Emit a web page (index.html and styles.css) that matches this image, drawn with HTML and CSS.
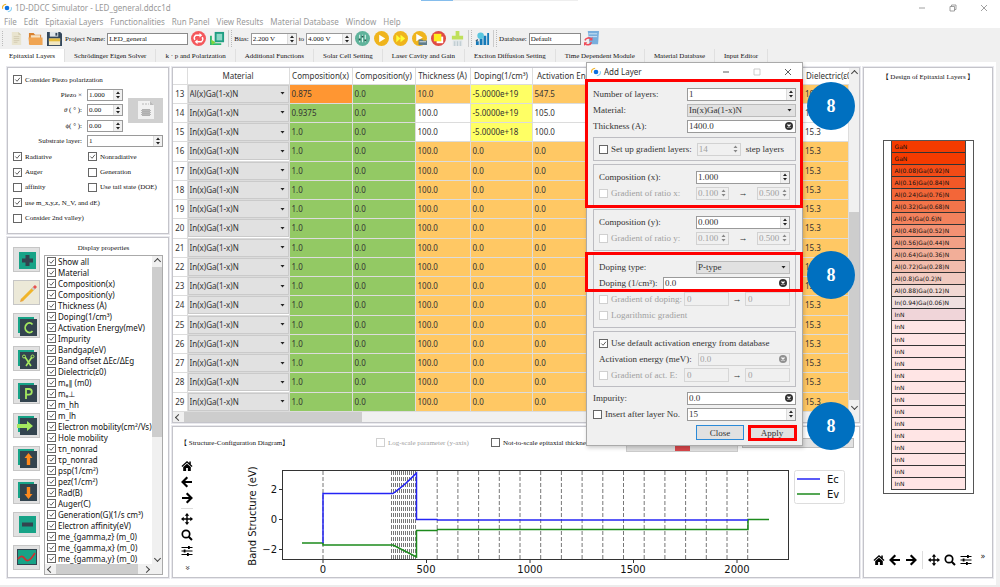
FILE: index.html
```html
<!DOCTYPE html>
<html lang="en">
<head>
<meta charset="utf-8">
<title>1D-DDCC Simulator - LED_general.ddcc1d</title>
<link rel="stylesheet" href="styles.css">
</head>
<body>
<svg class="defs" aria-hidden="true">
  <symbol id="logo" viewBox="0 0 12 12"><path d="M1 7A5 4 0 0 1 5 1.500" fill="none" stroke="#f2b632" stroke-width="1.400"/><path d="M11 5A5 4 0 0 1 7 10.500" fill="none" stroke="#8fd3f5" stroke-width="1.400"/><circle cx="6" cy="6" r="2.800" fill="#0b6fe0"/></symbol>
  <symbol id="home" viewBox="0 0 12 12"><path d="M6 1 0.500 6l.8.9L6 2.800l4.700 4.100.8-.9-1.700-1.600V1.500H8.300v1.600zM6 3.700 2.200 7v4h2.900V8h1.800v3h2.900V7z"/></symbol>
  <symbol id="back" viewBox="0 0 12 12"><path d="M6.300 1.300 1.600 6l4.700 4.700M2 6h9" fill="none" stroke="#000" stroke-width="2.200"/></symbol>
  <symbol id="fwd" viewBox="0 0 12 12"><path d="M5.700 1.300 10.400 6l-4.700 4.700M10 6H1" fill="none" stroke="#000" stroke-width="2.200"/></symbol>
  <symbol id="move" viewBox="0 0 12 12"><path d="M6 0l2.200 2.700H6.700v2.600h2.600V3.800L12 6 9.300 8.200V6.700H6.700v2.600h1.500L6 12 3.800 9.300h1.500V6.700H2.700v1.500L0 6l2.700-2.200v1.500h2.600V2.700H3.800z"/></symbol>
  <symbol id="lens" viewBox="0 0 12 12"><circle cx="5" cy="5" r="3.700" fill="none" stroke="#000" stroke-width="1.700"/><path d="M7.700 7.700 11 11" stroke="#000" stroke-width="2"/></symbol>
  <symbol id="sliders" viewBox="0 0 12 12"><path d="M0.500 2.500h11M.5 6h11M.5 9.500h11" stroke="#000"/><path d="M7 1h1.800v3H7zM2.700 4.500h1.800v3H2.700zM6 8h1.800v3H6z"/></symbol>
</svg>

<div class="app">
  <header class="titlebar">
    <svg class="logo"><use href="#logo"/></svg>
    <span class="caption">1D-DDCC Simulator - LED_general.ddcc1d</span>
    <span class="drag"></span>
    <button aria-label="Minimize"><svg viewBox="0 0 8 8"><path d="M1 4h6"/></svg></button>
    <button aria-label="Restore"><svg viewBox="0 0 8 8"><path d="M1 2.500h4.500V7H1zM2.500 2.500V1H7v4.500H5.500"/></svg></button>
    <button aria-label="Close window"><svg viewBox="0 0 8 8"><path d="M1 1l6 6M7 1 1 7"/></svg></button>
  </header>

  <nav class="menubar">
    <button>File</button><button>Edit</button><button>Epitaxial Layers</button><button>Functionalities</button><button>Run Panel</button><button>View Results</button><button>Material Database</button><button>Window</button><button>Help</button>
  </nav>

  <div class="toolbar">
    <i class="grip"></i>
    <button class="tool" aria-label="New"><svg viewBox="0 0 16 16"><path d="M3 1h7l3 3v11H3z" fill="#e9e4cf"/><path d="M10 1v3h3" fill="#cfc8aa"/><path d="M5 6h6M5 8h6M5 10h6M5 12h4" stroke="#d3ccb2"/></svg></button>
    <button class="tool" aria-label="Open"><svg viewBox="0 0 16 16"><path d="M1 2h5l1.500 2H14v10H1z" fill="#d9822f"/><path d="M3 4.500h10v5H3z" fill="#f6e3c4"/><path d="M.5 7h15v8H1.500z" fill="#f0a553"/></svg></button>
    <button class="tool" aria-label="Save"><svg viewBox="0 0 16 16"><path d="M0 1h14l2 2v13H0z" fill="#33475c"/><path d="M3 1h9v5H3z" fill="#dfe5ea"/><path d="M9 2h2v3H9z" fill="#33475c"/><path d="M2 8h12v7H2z" fill="#f2e6c0"/><path d="M2 8h12v3H2z" fill="#e4bb3c"/></svg></button>
    <label for="project">Project Name:</label>
    <input id="project" class="field project" value="LED_general">
    <button class="tool" aria-label="Sync"><svg viewBox="0 0 16 16"><circle cx="8" cy="8" r="8" fill="#f4585c"/><path d="M4 9.500a4 4 0 0 1 1-5h4.500M12 6.500a4 4 0 0 1-1 5H6.500" fill="none" stroke="#fff" stroke-width="1.500"/><path d="M9 2l3 2.500L9 7zM7 9l-3 2.500L7 14z" fill="#fff"/></svg></button>
    <button class="tool" aria-label="Reload"><svg viewBox="0 0 16 16"><path d="M5 1h10v11H5z" fill="#1f9e83"/><path d="M7 3h6v7H7z" fill="#8fd9c8"/><path d="M2 5v8h10v2H0V5z" fill="#2eb872"/><path d="M1 9l5 3-4 3z" fill="#7cd63c"/></svg></button>
    <i class="sep"></i>
    <label for="bias1">Bias:</label>
    <span class="spin bias"><input id="bias1" value="2.200 V"><i></i></span>
    <label for="bias2">to</label>
    <span class="spin bias"><input id="bias2" value="4.000 V"><i></i></span>
    <button class="tool" aria-label="Settings"><svg viewBox="0 0 16 16"><circle cx="8" cy="8" r="8" fill="#5fb39b"/><path d="M5 4v8M8 4v8M11 4v8" stroke="#e8f7f2"/><path d="M4 8h2v2H4zM7 5h2v2H7zM10 9h2v2h-2z" fill="#24584b"/></svg></button>
    <button class="tool" aria-label="Run"><svg viewBox="0 0 16 16"><circle cx="8" cy="8" r="8" fill="#efb41d"/><path d="M5.500 4l6.500 4-6.500 4z" fill="#fff"/></svg></button>
    <button class="tool" aria-label="Fast run"><svg viewBox="0 0 16 16"><circle cx="8" cy="8" r="8" fill="#efb41d"/><path d="M3.500 4 8 8l-4.500 4zM8 4l5 4-5 4z" fill="#ffff35"/></svg></button>
    <button class="tool" aria-label="Run file"><svg viewBox="0 0 16 16"><circle cx="8" cy="8" r="8" fill="#efb41d"/><path d="M4.500 3l7 4-7 4z" fill="#fff"/><path d="M7 9h4l1 1h4v5H7z" fill="#607d8b"/><path d="M8 11h7v1H8z" fill="#dfe8ec"/></svg></button>
    <button class="tool" aria-label="Stop"><svg viewBox="0 0 16 16"><circle cx="8" cy="8" r="8" fill="#df4b45"/><path d="M6 6h7v7H6z" fill="#fff"/><path d="M3 3h8v8H3z" fill="#ffee1c"/></svg></button>
    <button class="tool" aria-label="Clean"><svg viewBox="0 0 16 16"><path d="M6 0h4v5h4v4H2V5h4z" fill="#bfe05b"/><path d="M3 10h10v6H3z" fill="#dde4e7"/><path d="M5 11v5M8 11v5M11 11v5" stroke="#bcc9ce"/></svg></button>
    <i class="sep"></i>
    <button class="tool" aria-label="Plot"><svg viewBox="0 0 16 16"><path d="M1 11h3v4H1zM5 8h3v7H5zM9 5h3v10H9zM13 2h2v13h-2z" fill="#1479b8"/><circle cx="6" cy="5" r="3.500" fill="#59c6df"/><path d="M3 9 1 11" stroke="#2c5673" stroke-width="1.500"/></svg></button>
    <i class="sep"></i>
    <label for="db">Database:</label>
    <input id="db" class="field db" value="Default">
    <button class="tool" aria-label="Refresh database"><svg viewBox="0 0 16 16"><path d="M4 0h12l-1 14H6z" fill="#78aedd"/><path d="M5 3h9M5 6h9" stroke="#d4e7f6"/><path d="M1 10a4 4 0 0 1 7-1M8 12a4 4 0 0 1-7 1" fill="none" stroke="#ee4b59" stroke-width="1.700"/><path d="M9 6v4H5.500zM0 16v-4h3.500z" fill="#ee4b59"/></svg></button>
  </div>

  <nav class="tabs">
    <button class="active">Epitaxial Layers</button><button>Schrödinger Eigen Solver</button><button>k · p and Polarization</button><button>Additional Functions</button><button>Solar Cell Setting</button><button>Laser Cavity and Gain</button><button>Exciton Diffusion Setting</button><button>Time Dependent Module</button><button>Material Database</button><button>Input Editor</button>
  </nav>

  <main class="workspace">
    <div class="col left">
      <section class="panel options">
        <label><input type="checkbox" checked>Consider Piezo polarization</label>
        <div class="piezo">
          <label for="px">Piezo ×</label><span class="spin"><input id="px" value="1.000"><i></i></span>
          <label for="th"><em>θ</em>&nbsp;( ° ):</label><span class="spin"><input id="th" value="0.00"><i></i></span>
          <label for="ph">ϕ( ° ):</label><span class="spin"><input id="ph" value="0.00"><i></i></span>
          <button class="doc" aria-label="Layer file"><svg viewBox="0 0 18 20"><path d="M1 1h12l4 4v14H1z" fill="#f1f1f1"/><path d="M13 1v4h4" fill="#bbb"/><path d="M5 9h8v7H5z" fill="#b0b0b0"/><path d="M5 4h2M8 4h2M11 4h1M4 10.500h10M4 12.500h10M4 14.500h10" stroke="#b8b8b8"/></svg></button>
        </div>
        <div class="substrate"><label for="sub">Substrate layer:</label><span class="spin"><input id="sub" value="1"><i></i></span></div>
        <div class="pair"><label><input type="checkbox" checked>Radiative</label><label><input type="checkbox" checked>Nonradiative</label></div>
        <div class="pair"><label><input type="checkbox" checked>Auger</label><label><input type="checkbox">Generation</label></div>
        <div class="pair"><label><input type="checkbox">affinity</label><label><input type="checkbox">Use tail state (DOE)</label></div>
        <label><input type="checkbox" checked>use m_x,y,z, N_V, and dE)</label>
        <label><input type="checkbox">Consider 2nd valley)</label>
      </section>

      <section class="panel display">
        <div class="actions">
          <button aria-label="Add"><svg viewBox="0 0 20 20"><path d="M2 2h17v17H2z" fill="#17a387"/><path d="M10.500 5v11M5 10.500h11" stroke="#33444f" stroke-width="4"/></svg></button>
          <button class="edit" aria-label="Edit"><svg viewBox="0 0 20 20"><path d="M5 17 17 5" stroke="#f0b429" stroke-width="3"/><path d="M15.500 6.500 18 4" stroke="#c9c9c9" stroke-width="3"/><path d="M17 5l2-2" stroke="#e8524f" stroke-width="3"/><path d="M3 19l1-3.500L6.500 18z" fill="#e8a23a"/></svg></button>
          <button aria-label="Copy"><svg viewBox="0 0 20 20"><path d="M1 1h16v16H1z" fill="#17a387"/><path d="M3 3h17v17H3z" fill="#33444f"/><path d="M15.500 8.500A4.200 4.800 0 1 0 15.500 15" fill="none" stroke="#a5e85f" stroke-width="1.800"/></svg></button>
          <button aria-label="Cut"><svg viewBox="0 0 20 20"><path d="M1 1h16v16H1z" fill="#17a387"/><path d="M3 3h17v17H3z" fill="#33444f"/><path d="M8 8l6 9M15 8 9 17" stroke="#a5e85f" stroke-width="1.600"/><circle cx="7" cy="7.500" r="1.500" fill="none" stroke="#a5e85f"/><circle cx="15.500" cy="7.500" r="1.500" fill="none" stroke="#a5e85f"/></svg></button>
          <button aria-label="Paste"><svg viewBox="0 0 20 20"><path d="M1 1h16v16H1z" fill="#17a387"/><path d="M3 3h17v17H3z" fill="#33444f"/><path d="M9 17V7h3a2.800 2.800 0 0 1 0 5.600H9" fill="none" stroke="#a5e85f" stroke-width="1.800"/></svg></button>
          <button aria-label="Insert"><svg viewBox="0 0 20 20"><path d="M1 1h16v16H1z" fill="#17a387"/><path d="M3 3h17v17H3z" fill="#33444f"/><path d="M0 9h10V6l6 5-6 5v-3H0z" fill="#a5e85f"/></svg></button>
          <button aria-label="Move up"><svg viewBox="0 0 20 20"><path d="M1 1h16v16H1z" fill="#17a387"/><path d="M3 3h17v17H3z" fill="#33444f"/><path d="M11.500 5l4 5h-2.300v7H9.800v-7H7.500z" fill="#ff8a1d"/></svg></button>
          <button aria-label="Move down"><svg viewBox="0 0 20 20"><path d="M1 1h16v16H1z" fill="#17a387"/><path d="M3 3h17v17H3z" fill="#33444f"/><path d="M11.500 18l4-5h-2.300V6H9.800v7H7.500z" fill="#ff8a1d"/></svg></button>
          <button aria-label="Remove"><svg viewBox="0 0 20 20"><path d="M2 2h17v17H2z" fill="#17a387"/><path d="M5 10.500h11" stroke="#33444f" stroke-width="4"/></svg></button>
          <button aria-label="Curve"><svg viewBox="0 0 20 20"><path d="M0 2h20v16H0z" fill="#33444f"/><path d="M1 3h18v14H1z" fill="#17a387"/><path d="M1 12c3-4 5-3 7 0s5 2 10-6" fill="none" stroke="#cf2f2f" stroke-width="1.600"/></svg></button>
        </div>
        <div class="props">
          <h2>Display properties</h2>
          <div class="listbox">
            <div class="items" id="properties"></div>
            <div class="vbar"><i class="up"></i><b></b><i class="down"></i></div>
            <div class="hbar"><i class="prev"></i><b></b><i class="next"></i></div>
          </div>
        </div>
      </section>
    </div>

    <div class="col middle">
      <section class="panel grid">
        <div class="tablewrap">
          <table>
            <colgroup><col class="c-num"><col class="c-mat"><col class="c-cx"><col class="c-cy"><col class="c-th"><col class="c-dop"><col class="c-act"><col><col class="c-die"></colgroup>
            <thead><tr><th></th><th>Material</th><th>Composition(x)</th><th>Composition(y)</th><th>Thickness (Å)</th><th>Doping(1/cm³)</th><th>Activation Energy(meV)</th><th></th><th class="clip">Dielectric(ε0)</th></tr></thead>
            <tbody id="layers"></tbody>
          </table>
        </div>
        <div class="vbar"><i class="up"></i><b></b><i class="down"></i></div>
        <div class="hbar"><i class="prev"></i><b></b></div>
      </section>

      <section class="panel diagram">
        <div class="diagram-head">
          <h2>【 Structure-Configuration Diagram】</h2>
          <label class="off"><input type="checkbox" disabled>Log-scale parameter (y-axis)</label>
          <label><input type="checkbox">Not-to-scale epitaxial thickness</label>
          <button class="export" aria-label="Export"><i></i></button>
          <select aria-label="Parameter"><option></option></select>
        </div>
        <div class="diagram-body">
          <div class="plot-tools vertical">
            <button aria-label="Home"><svg><use href="#home"/></svg></button>
            <button aria-label="Back"><svg><use href="#back"/></svg></button>
            <button aria-label="Forward"><svg><use href="#fwd"/></svg></button>
            <hr>
            <button aria-label="Pan"><svg><use href="#move"/></svg></button>
            <button aria-label="Zoom"><svg><use href="#lens"/></svg></button>
            <button aria-label="Configure"><svg><use href="#sliders"/></svg></button>
            <button class="more" aria-label="More">»</button>
          </div>
          <svg class="chart" viewBox="240 458 619 119" role="img" aria-label="Band structure">
            <g id="gridlines"></g>
            <path d="M302 543H323V545H393L416.500 557V530.500H437L437.500 529.500H748V519.500H769" class="ev"/>
            <path d="M323 543V493.500H393Q405 485 416.500 473V519.500H437L437.500 520H748" class="ec"/>
            <rect x="282.500" y="470.500" width="506" height="89" class="frame"/>
            <path d="M279 489.500h3M279 519.500h3M279 549.500h3M323 560v3M426.500 560v3M530 560v3M633.500 560v3M737 560v3" class="tick"/>
            <g class="ends"><text x="277" y="493">2</text><text x="277" y="523">0</text><text x="277" y="553">−2</text></g>
            <g class="mids"><text x="323" y="573">0</text><text x="426" y="573">500</text><text x="530" y="573">1000</text><text x="633" y="573">1500</text><text x="737" y="573">2000</text><text transform="translate(256 516) rotate(-90)">Band Structure (eV)</text></g>
            <rect x="794.500" y="470.500" width="50" height="33" rx="2" class="legend"/>
            <path d="M797 479H820" class="ec"/><path d="M797 494H820" class="ev"/>
            <text x="827" y="483">Ec</text><text x="827" y="498">Ev</text>
          </svg>
        </div>
      </section>
    </div>

    <section class="panel design">
      <h2>【 Design of Epitaxial Layers 】</h2>
      <div class="stack"><ol id="stack"></ol></div>
      <div class="plot-tools">
        <button aria-label="Home"><svg><use href="#home"/></svg></button>
        <button aria-label="Back"><svg><use href="#back"/></svg></button>
        <button aria-label="Forward"><svg><use href="#fwd"/></svg></button>
        <hr>
        <button aria-label="Pan"><svg><use href="#move"/></svg></button>
        <button aria-label="Zoom"><svg><use href="#lens"/></svg></button>
        <button aria-label="Configure"><svg><use href="#sliders"/></svg></button>
        <button class="more" aria-label="More">»</button>
      </div>
    </section>
  </main>
  <footer class="statusbar"></footer>
</div>

<div class="dialog" role="dialog" aria-labelledby="dlg-title">
  <header>
    <svg class="logo"><use href="#logo"/></svg><span id="dlg-title">Add Layer</span>
    <button aria-label="Minimize dialog"><svg viewBox="0 0 8 8"><path d="M1 4h6"/></svg></button>
    <button class="faint" aria-label="Maximize dialog"><svg viewBox="0 0 8 8"><path d="M1 1h6v6H1z"/></svg></button>
    <button aria-label="Close dialog"><svg viewBox="0 0 8 8"><path d="M1 1l6 6M7 1 1 7"/></svg></button>
  </header>
  <form class="form">
    <div class="rows">
      <div class="row"><label for="n">Number of layers:</label><span class="spin w-main"><input id="n" value="1"><i></i></span></div>
      <div class="row"><label for="mat">Material:</label><select id="mat" class="w-main"><option>In(x)Ga(1-x)N</option></select></div>
      <div class="row"><label for="t">Thickness (A):</label><span class="clearable w-main"><input id="t" value="1400.0"><button type="button" aria-label="Clear thickness"></button></span></div>
    </div>
    <fieldset class="single">
      <div class="row start"><label><input type="checkbox">Set up gradient layers:</label><span class="spin off w-step"><input aria-label="Steps" value="14" disabled><i></i></span><span>step layers</span></div>
    </fieldset>
    <fieldset>
      <div class="row"><label for="cx">Composition (x):</label><span class="spin w-comp"><input id="cx" value="1.000"><i></i></span></div>
      <div class="row off"><label><input type="checkbox" disabled>Gradient of ratio x:</label><div class="range w-comp"><span class="spin off"><input aria-label="From x" value="0.100" disabled><i></i></span><span class="arrow">→</span><span class="spin off"><input aria-label="To x" value="0.500" disabled><i></i></span></div></div>
    </fieldset>
    <fieldset>
      <div class="row"><label for="cy">Composition (y):</label><span class="spin w-comp"><input id="cy" value="0.000"><i></i></span></div>
      <div class="row off"><label><input type="checkbox" disabled>Gradient of ratio y:</label><div class="range w-comp"><span class="spin off"><input aria-label="From y" value="0.100" disabled><i></i></span><span class="arrow">→</span><span class="spin off"><input aria-label="To y" value="0.500" disabled><i></i></span></div></div>
    </fieldset>
    <fieldset>
      <div class="row"><label for="dt">Doping type:</label><select id="dt" class="w-comp"><option>P-type</option></select></div>
      <div class="row"><label for="dp">Doping (1/cm³):</label><span class="clearable w-dope"><input id="dp" value="0.0"><button type="button" aria-label="Clear doping"></button></span></div>
      <div class="row off"><label><input type="checkbox" disabled>Gradient of doping:</label><div class="range w-grad"><input class="plain" aria-label="Doping from" value="0" disabled><span class="arrow">→</span><input class="plain" aria-label="Doping to" value="0" disabled></div></div>
      <div class="row off"><label><input type="checkbox" disabled>Logarithmic gradient</label></div>
    </fieldset>
    <fieldset class="energy">
      <div class="row"><label><input type="checkbox" checked>Use default activation energy from database</label></div>
      <div class="row"><label for="ae">Activation energy (meV):</label><span class="clearable off w-act"><input id="ae" value="0.0" disabled><button type="button" aria-label="Clear energy"></button></span></div>
      <div class="row off"><label><input type="checkbox" disabled>Gradient of act. E:</label><div class="range w-grad"><input class="plain" aria-label="Energy from" value="0" disabled><span class="arrow">→</span><input class="plain" aria-label="Energy to" value="0" disabled></div></div>
    </fieldset>
    <div class="rows">
      <div class="row"><label for="im">Impurity:</label><span class="clearable w-main"><input id="im" value="0.0"><button type="button" aria-label="Clear impurity"></button></span></div>
      <div class="row"><label><input type="checkbox">Insert after layer No.</label><span class="spin w-main"><input aria-label="Layer number" value="15"><i></i></span></div>
    </div>
    <div class="buttons"><button type="button" class="primary">Close</button><button type="button">Apply</button></div>
  </form>
  <div class="mark m1"></div><div class="mark m2"></div><div class="mark m3"></div>
  <div class="badge b1">8</div><div class="badge b2">8</div><div class="badge b3">8</div>
</div>
<script src="app.js"></script>
</body>
</html>
```
FILE: styles.css
```css
* { box-sizing: border-box; }
body { margin: 0; font: 7px "Liberation Serif", "Noto Sans CJK TC", serif; color: #111; background: #fff; overflow: hidden; }
button, input, select { font: inherit; color: inherit; border: 0; margin: 0; padding: 0; min-width: 0; background: none; border-radius: 0; }
h2 { margin: 0; font-size: 7px; font-weight: normal; line-height: 12px; }
.defs { position: absolute; width: 0; height: 0; }
.app { height: 100vh; display: flex; flex-direction: column; }

/* window chrome */
.titlebar { height: 15px; display: flex; align-items: center; gap: 3px; padding: 0 12px 0 2px; font-family: "Noto Sans", sans-serif; font-size: 8px; color: #999; background: linear-gradient(90deg, #fff 42.1%, #85bdec 42.1% 45.3%, #eee 45.3% 57.8%, #fff 57.8%) top / 100% 1px no-repeat; }
.logo { width: 10px; height: 10px; }
.drag { flex: 1; }
.titlebar button { width: 8px; height: 12px; margin-left: 20px; display: flex; align-items: center; }
.titlebar button svg { width: 8px; height: 8px; fill: none; stroke: #888; stroke-width: 0.800; }
.menubar { height: 13px; display: flex; align-items: center; gap: 7px; padding-left: 4px; font-family: "Noto Sans", sans-serif; font-size: 8px; color: #999; }
.toolbar { height: 21px; display: flex; align-items: center; background: #f0f0f0; gap: 2px; padding-left: 2px; }
.grip { width: 2px; height: 15px; border-left: 1px dotted #bbb; margin-right: 2px; }
.sep { width: 4px; height: 17px; border-left: 1px solid #ccc; border-right: 1px dotted #bbb; }
.tool { width: 17px; height: 17px; padding: 1px; display: flex; }
.tool svg { width: 100%; height: 100%; }
.field { height: 12px; border: 1px solid #8a8a8a; background: #fff; padding: 0 1px; }
.project { width: 81px; }
.db { width: 52px; }
.bias { width: 46px; }
.tabs { height: 13px; display: flex; background: #f0f0f0; font-size: 7px; }
.tabs button { padding: 0 9px; border-right: 1px solid #e0e0e0; }
.tabs .active { background: #fff; }
.statusbar { height: 2px; background: #ececec; }

/* shared controls */
.spin, .clearable { display: flex; height: 12px; border: 1px solid #9a9a9a; background: #fff; }
.spin input, .clearable input { flex: 1; width: 0; padding-left: 1px; }
.spin i { width: 9px; background: url("data:image/svg+xml,%3Csvg xmlns='http://www.w3.org/2000/svg' viewBox='0 0 9 10'%3E%3Cpath d='M2.500 4 4.500 1.500 6.500 4zM2.500 6h4L4.500 8.500z' fill='%23222'/%3E%3C/svg%3E") center / 9px 10px no-repeat #f0f0f0; border-left: 1px solid #ddd; }
.spin.off, .clearable.off { background: #f0f0f0; border-color: #d2d2d2; color: #a0a0a0; }
.spin.off i { opacity: 0.500; border: 0; }
.off { color: #a0a0a0; }
.clearable button { width: 12px; background: url("data:image/svg+xml,%3Csvg xmlns='http://www.w3.org/2000/svg' viewBox='0 0 8 8'%3E%3Ccircle cx='4' cy='4' r='4' fill='%23333'/%3E%3Cpath d='M2.500 2.500l3 3M5.500 2.500l-3 3' stroke='%23fff' stroke-width='1.200'/%3E%3C/svg%3E") center / 8px no-repeat; }
.clearable.off button { opacity: 0.500; }
label { display: flex; align-items: center; white-space: nowrap; }
input[type=checkbox] { appearance: none; flex: none; width: 9px; height: 9px; border: 1px solid #666; background: #fff; margin-right: 3px; }
input[type=checkbox]:checked { background: url("data:image/svg+xml,%3Csvg xmlns='http://www.w3.org/2000/svg' viewBox='0 0 8 8'%3E%3Cpath d='M1.500 4l2 2 3.300-4' fill='none' stroke='%23333' stroke-width='0.900'/%3E%3C/svg%3E") center / 7px no-repeat #fff; }
input[type=checkbox]:disabled { border-color: #d0d0d0; }
select { appearance: none; background: url("data:image/svg+xml,%3Csvg xmlns='http://www.w3.org/2000/svg' viewBox='0 0 5 3'%3E%3Cpath d='M0.500 0h4L2.500 2.500z' fill='%23222'/%3E%3C/svg%3E") right 3px center / 5px 3px no-repeat #e1e1e1; border: 1px solid #bbb; padding: 0 2px; }
.vbar, .hbar { background: #f0f0f0; display: flex; align-items: center; }
.vbar { flex-direction: column; }
.vbar b, .hbar b { background: #cdcdcd; }
.vbar b { width: 100%; }
.hbar b { height: 100%; }
.vbar i, .hbar i { flex: none; width: 11px; height: 11px; display: flex; align-items: center; justify-content: center; }
.vbar i::before, .hbar i::before { content: ""; width: 4px; height: 4px; border: solid #444; border-width: 1px 0 0 1px; }
.up::before { transform: rotate(45deg); }
.down::before { transform: rotate(225deg); }
.prev::before { transform: rotate(-45deg); }
.next::before { transform: rotate(135deg); }
.vbar .down { margin-top: auto; }
.hbar .next { margin-left: auto; }

/* work area */
.workspace { flex: 1; min-height: 0; display: grid; grid-template-columns: 162px minmax(0, 1fr) 130px; gap: 3px; padding: 5px 3px 7px 7px; border-right: 4px solid #f0f0f0; }
.col { display: grid; gap: 3px; min-height: 0; }
.left { grid-template-rows: 167px minmax(0, 1fr); }
.middle { grid-template-rows: minmax(0, 1fr) 152px; }
.panel { border: 1px solid #c4c4ca; box-shadow: 0 0 0 1px #e9e9ee; min-height: 0; min-width: 0; background: #fff; }

.options { display: grid; grid-template-rows: repeat(10, 1fr); padding: 4px 5px 7px; }
.piezo { grid-row: span 3; display: grid; grid-template-columns: 69px 36px 35px; grid-template-rows: repeat(3, 1fr); column-gap: 5px; align-items: center; }
.piezo label, .substrate label { justify-content: flex-end; }
.doc { grid-column: 3; grid-row: 1 / 4; height: 25px; background: #d0d0d0; display: flex; align-items: center; justify-content: center; }
.doc svg { width: 18px; height: 20px; }
.substrate { display: grid; grid-template-columns: 69px 1fr; gap: 5px; align-items: center; }
.pair { display: grid; grid-template-columns: 75px 1fr; }

.display { display: grid; grid-template-columns: 27px 119px; gap: 4px; padding: 9px 5px 6px; }
.actions { display: flex; flex-direction: column; justify-content: space-between; padding-bottom: 5px; }
.actions button { height: 25px; background: #e1e1e1; border: 1px solid #c6c6c6; display: flex; align-items: center; justify-content: center; }
.actions svg { width: 20px; height: 20px; }
.actions .edit { background: #ece9d8; }
.props { display: grid; grid-template-rows: 8px minmax(0, 1fr); text-align: center; }
.props h2 { line-height: 3px; }
.listbox { border: 1px solid #aaa; display: grid; grid-template: minmax(0, 1fr) 10px / minmax(0, 1fr) 10px; text-align: left; font-family: "Noto Sans", "DejaVu Sans", sans-serif; font-size: 8px; }
.items { overflow: hidden; padding-left: 2px; }
.items label { height: 11px; }
.items input[type=checkbox] { margin-right: 2px; }
.listbox .vbar b { height: 170px; }
.listbox .hbar { grid-column: 1 / 3; padding-right: 10px; }
.listbox .hbar b { width: 82px; }

/* layer table */
.grid { display: grid; grid-template: minmax(0, 1fr) 10px / minmax(0, 1fr) 10px; font-family: "Noto Sans", sans-serif; font-size: 8px; }
.tablewrap { min-height: 0; overflow: hidden; }
table { width: 100%; height: 100%; table-layout: fixed; border-collapse: collapse; }
th, td { padding: 0 0 0 2px; text-align: left; font-weight: normal; border-right: 1px solid #ddd; border-bottom: 1px solid #dcdcdc; white-space: nowrap; overflow: hidden; line-height: 10px; color: #333; }
thead th { height: 16px; text-align: center; padding: 0; }
thead .clip { text-align: left; padding-left: 3px; border-right: 0; }
tbody th { text-align: center; padding: 0; }
.c-num { width: 14px; }
.c-mat { width: 102px; }
.c-cx, .c-cy { width: 63px; }
.c-th { width: 55px; }
.c-dop { width: 62px; }
.c-act { width: 97px; }
.c-die { width: 46px; }
td.m { padding: 0; height: 1px; }
td select { display: block; width: 100%; height: 18px; padding: 0 1px; border-color: #cacaca; }
.g { background: #93c964; }
.o { background: #ffc864; }
.h { background: #ff9632; }
.y { background: #ffff64; }
.grid .vbar { grid-column: 2; }
.grid .vbar b { height: 188px; margin-top: 133px; }
.grid .hbar { grid-column: 1 / 3; }
.grid .hbar b { width: 178px; }

/* band diagram */
.diagram { display: flex; flex-direction: column; }
.diagram-head { display: grid; grid-template-columns: 192px 111px 131px 112px 112px; gap: 0 4px; padding-left: 7px; height: 31px; align-items: center; }
.diagram-head label { overflow: hidden; }
.diagram-head h2 { white-space: nowrap; }
.export { height: 18px; background: #e1e1e1; border: 1px solid #ccc; display: flex; align-items: flex-end; justify-content: center; }
.export i { width: 15px; height: 8px; background: #d8474b; }
.diagram-head select { height: 10px; }
.diagram-body { flex: 1; min-height: 0; display: grid; grid-template-columns: 67px minmax(0, 1fr); }
.chart { width: 100%; height: 100%; font: 10px "DejaVu Sans", sans-serif; fill: #111; }
.chart path { fill: none; }
.chart .ec { stroke: #2424f5; stroke-width: 1.500; }
.chart .ev { stroke: #1c8a1c; stroke-width: 1.500; }
.chart .frame { fill: none; stroke: #333; }
.chart .tick { stroke: #333; }
.chart .dash { stroke: #777; stroke-dasharray: 4 2; }
.chart .legend { fill: #fff; stroke: #ddd; }
.ends { text-anchor: end; }
.mids { text-anchor: middle; }
.plot-tools { display: flex; align-items: center; gap: 4px; }
.plot-tools svg { width: 12px; height: 12px; display: block; }
.plot-tools hr { width: 1px; height: 18px; border: 0; margin: 0 1px; background: #ddd; }
.plot-tools.vertical { flex-direction: column; align-items: center; width: 28px; padding: 2px 0 5px; }
.plot-tools.vertical hr { width: 12px; height: 1px; margin: 0; }
.more { font: 8px "DejaVu Sans", sans-serif; }
.vertical .more { transform: rotate(90deg); margin-top: auto; line-height: 8px; }

/* layer stack */
.design { display: flex; flex-direction: column; align-items: center; padding-top: 3px; }
.stack { width: 91px; flex: 1; margin: 57px 0 57px; padding: 0 7px 3px; border: 1px solid #555; display: flex; }
.stack ol { flex: 1; display: flex; flex-direction: column; margin: 0; padding: 0; list-style: none; border: 1px solid #444; border-top: 0; font: 6px "DejaVu Sans", sans-serif; }
.stack li { flex: 1; padding-left: 3px; display: flex; align-items: center; border-bottom: 1px solid #333; }
.stack li:last-child { border-bottom: 0; }
.design .plot-tools { padding: 0 0 8px 2px; }
.design .more { margin-left: 5px; padding-bottom: 8px; }

/* add-layer dialog */
.dialog { position: absolute; left: 586px; top: 62px; width: 217px; background: #f0f0f0; border: 1px solid #aaa; box-shadow: 1px 2px 4px #0003; font-size: 9px; color: #333; }
.dialog header { height: 17px; background: #fff; display: flex; align-items: center; gap: 3px; padding: 0 10px 0 4px; font-family: "Noto Sans", sans-serif; font-size: 8px; }
.dialog header span { flex: 1; }
.dialog header button { width: 8px; height: 8px; margin-left: 20px; display: flex; }
.dialog header button svg { width: 8px; height: 8px; fill: none; stroke: #333; stroke-width: 0.800; }
.dialog header .faint { opacity: 0.300; }
.form { display: flex; flex-direction: column; gap: 3px; padding: 6px 6px 5px; }
.row { height: 16px; display: flex; align-items: center; justify-content: space-between; white-space: nowrap; }
.row.start { justify-content: flex-start; gap: 5px; }
fieldset { min-width: 0; margin: 0; padding: 4px 5px; border: 1px solid #bdbdc2; }
fieldset.single { padding: 3px 5px; }
fieldset.energy { padding: 3px 5px; }
.dialog .spin, .dialog .clearable, .dialog select { height: 13px; }
.dialog select { padding: 0 1px; }
.plain { height: 14px; width: 45px; padding-left: 2px; border: 1px solid #d6d6d6; }
.range { display: flex; align-items: center; justify-content: space-between; }
.range .spin { width: 33px; }
.arrow { color: #333; }
.w-main { width: 109px; }
.w-comp { width: 94px; }
.w-step { width: 44px; }
.w-dope { width: 127px; }
.w-act { width: 92px; }
.w-grad { width: 106px; }
.buttons { display: flex; justify-content: flex-end; gap: 4px; }
.buttons button { width: 48px; height: 15px; background: #e1e1e1; border: 1px solid #aaa; }
.buttons .primary { border: 1px solid #2b8ad8; }
.mark { position: absolute; border: 3px solid #f00; pointer-events: none; }
.m1 { left: -2px; top: 16px; width: 218px; height: 129px; }
.m2 { left: -2px; top: 189px; width: 218px; height: 40px; }
.m3 { left: 161px; top: 362px; width: 49px; height: 16px; }
.badge { position: absolute; left: 220px; width: 48px; height: 48px; border-radius: 50%; background: #0070c0; color: #fff; font-size: 18px; font-weight: bold; display: flex; align-items: center; justify-content: center; }
.b1 { top: 19px; }
.b2 { top: 188px; }
.b3 { top: 339px; }
```
FILE: app.js
```js
const properties = ["Show all", "Material", "Composition(x)", "Composition(y)", "Thickness (Å)", "Doping(1/cm³)", "Activation Energy(meV)", "Impurity", "Bandgap(eV)", "Band offset ΔEc/ΔEg", "Dielectric(ε0)", "mₑ∥ (m0)", "mₑ⊥", "m_hh", "m_lh", "Electron mobility(cm²/Vs)", "Hole mobility", "τn_nonrad", "τp_nonrad", "psp(1/cm²)", "pez(1/cm²)", "Rad(B)", "Auger(C)", "Generation(G)(1/s cm³)", "Electron affinity(eV)", "me_{gamma,z} (m_0)", "me_{gamma,x} (m_0)", "me_{gamma,y} (m_0)"];
document.getElementById("properties").innerHTML = properties
  .map(p => `<label><input type="checkbox" checked>${p}</label>`).join("");

const rows = [
  [13, "Al(x)Ga(1-x)N", "0.875", "10.0", "-5.0000e+19", "547.5", "10.3"],
  [14, "In(x)Ga(1-x)N", "0.9375", "100.0", "-5.0000e+19", "105.0", "15.0"],
  [15, "In(x)Ga(1-x)N", "1.0", "100.0", "-5.0000e+18", "100.0", "15.3"]
];
for (let n = 16; n < 30; n++) rows.push([n, "In(x)Ga(1-x)N", "1.0", "100.0", "0.0", "0.0", "15.3"]);
document.getElementById("layers").innerHTML = rows.map(([n, material, x, thick, doping, energy, eps]) => {
  const base = n === 14 || n === 15 ? "" : "o";
  return `<tr><th>${n}</th><td class="m"><select aria-label="Material ${n}"><option>${material}</option></select></td>` +
    `<td class="${n === 13 ? "h" : "g"}">${x}</td><td class="g">0.0</td><td class="${base}">${thick}</td>` +
    `<td class="${n < 16 ? "y" : "o"}">${doping}</td><td class="${base}">${energy}</td><td class="${base}"></td><td class="${base}">${eps}</td></tr>`;
}).join("");

const stack = [["GaN", "#f43b00"], ["GaN", "#f43b00"], ["Al(0.08)Ga(0.92)N", "#f34b16"], ["Al(0.16)Ga(0.84)N", "#f35827"], ["Al(0.24)Ga(0.76)N", "#f36638"], ["Al(0.32)Ga(0.68)N", "#f3744a"], ["Al(0.4)Ga(0.6)N", "#f3825d"], ["Al(0.48)Ga(0.52)N", "#f39173"], ["Al(0.56)Ga(0.44)N", "#f2a086"], ["Al(0.64)Ga(0.36)N", "#f2ae98"], ["Al(0.72)Ga(0.28)N", "#f2bcac"], ["Al(0.8)Ga(0.2)N", "#f1cac0"], ["Al(0.88)Ga(0.12)N", "#f1d8d3"], ["In(0.94)Ga(0.06)N", "#efe0e0"], ["InN", "#f0d5d9"]];
while (stack.length < 29) stack.push(["InN", "#ffe5e5"]);
document.getElementById("stack").innerHTML = stack.map(([name, fill]) => `<li style="background:${fill}">${name}</li>`).join("");

const lines = [323];
for (let i = 0; i < 13; i++) lines.push(391.5 + i * 2);
for (let i = 1; i <= 16; i++) lines.push(416.5 + i * 20.7);
document.getElementById("gridlines").innerHTML = lines.map(x => `<path class="dash" d="M${x} 471V559"/>`).join("");
```
